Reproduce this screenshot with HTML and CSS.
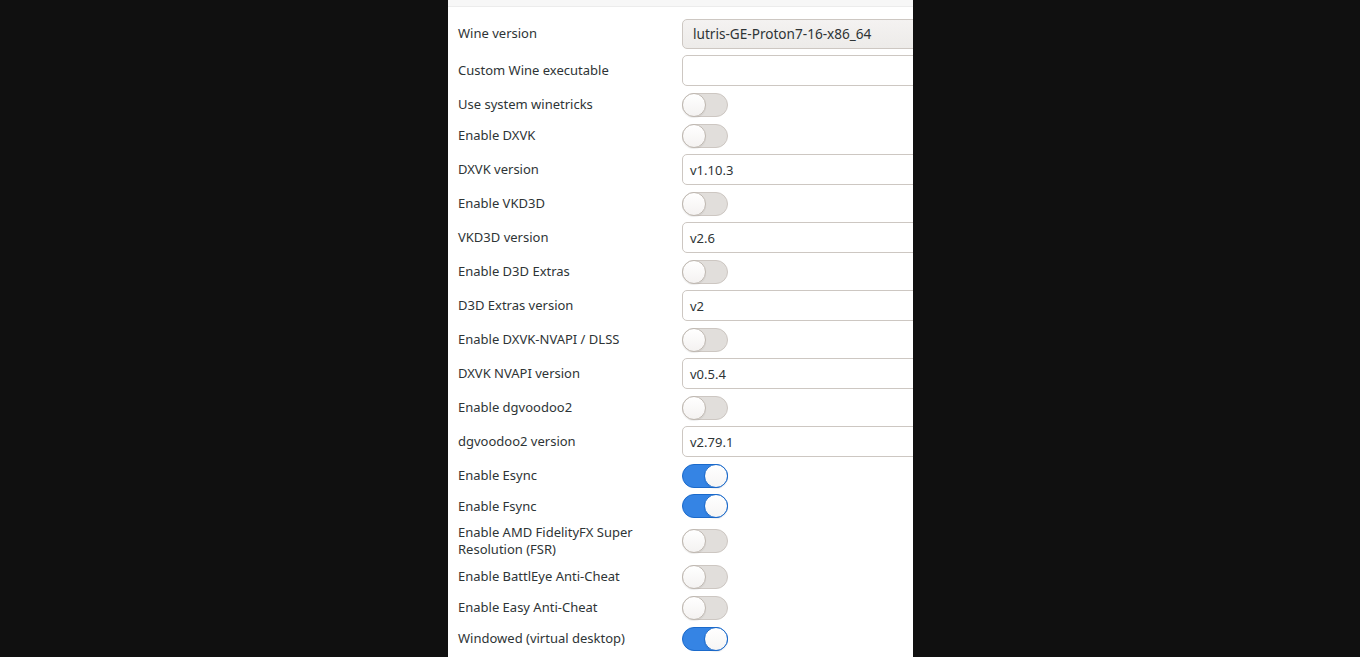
FILE: index.html
```html
<!DOCTYPE html>
<html>
<head>
<meta charset="utf-8">
<link rel="stylesheet" href="styles.css">
</head>
<body>
<div class="stage">
  <div class="panel">
    <div class="topstrip"></div>
    <div class="list">
      <div class="row row-entry"><div class="label">Wine version</div><div class="ctl"><div class="combo">lutris-GE-Proton7-16-x86_64</div></div></div>
      <div class="row row-entry"><div class="label">Custom Wine executable</div><div class="ctl"><div class="entry"></div></div></div>
      <div class="row row-switch"><div class="label">Use system winetricks</div><div class="ctl"><div class="switch"></div></div></div>
      <div class="row row-switch"><div class="label">Enable DXVK</div><div class="ctl"><div class="switch"></div></div></div>
      <div class="row row-entry"><div class="label">DXVK version</div><div class="ctl"><div class="entry">v1.10.3</div></div></div>
      <div class="row row-switch"><div class="label">Enable VKD3D</div><div class="ctl"><div class="switch"></div></div></div>
      <div class="row row-entry"><div class="label">VKD3D version</div><div class="ctl"><div class="entry">v2.6</div></div></div>
      <div class="row row-switch"><div class="label">Enable D3D Extras</div><div class="ctl"><div class="switch"></div></div></div>
      <div class="row row-entry"><div class="label">D3D Extras version</div><div class="ctl"><div class="entry">v2</div></div></div>
      <div class="row row-switch"><div class="label">Enable DXVK-NVAPI / DLSS</div><div class="ctl"><div class="switch"></div></div></div>
      <div class="row row-entry"><div class="label">DXVK NVAPI version</div><div class="ctl"><div class="entry">v0.5.4</div></div></div>
      <div class="row row-switch"><div class="label">Enable dgvoodoo2</div><div class="ctl"><div class="switch"></div></div></div>
      <div class="row row-entry"><div class="label">dgvoodoo2 version</div><div class="ctl"><div class="entry">v2.79.1</div></div></div>
      <div class="row row-switch"><div class="label">Enable Esync</div><div class="ctl"><div class="switch on"></div></div></div>
      <div class="row row-switch tight"><div class="label">Enable Fsync</div><div class="ctl"><div class="switch on"></div></div></div>
      <div class="row row-switch"><div class="label">Enable AMD FidelityFX Super Resolution (FSR)</div><div class="ctl"><div class="switch"></div></div></div>
      <div class="row row-switch"><div class="label">Enable BattlEye Anti-Cheat</div><div class="ctl"><div class="switch"></div></div></div>
      <div class="row row-switch"><div class="label">Enable Easy Anti-Cheat</div><div class="ctl"><div class="switch"></div></div></div>
      <div class="row row-switch"><div class="label">Windowed (virtual desktop)</div><div class="ctl"><div class="switch on"></div></div></div>
    </div>
  </div>
</div>
</body>
</html>
```
FILE: styles.css
```css
html, body {
  margin: 0;
  padding: 0;
  background: #101010;
  height: 100%;
  overflow: hidden;
}
.stage {
  display: flex;
  justify-content: flex-start;
  padding-left: 448px;
  height: 657px;
}
.panel {
  width: 465px;
  height: 657px;
  background: #ffffff;
  overflow: hidden;
  font-family: "Noto Sans", "DejaVu Sans", sans-serif;
  font-size: 13px;
  color: #2e3436;
}
.topstrip {
  height: 6px;
  background: #f7f7f7;
  border-bottom: 1px solid #ececec;
}
.list {
  padding: 8px 0 0 10px;
  display: flex;
  flex-direction: column;
}
.row {
  display: flex;
  align-items: center;
  padding: 3px 0;
}
.row-entry { min-height: 31px; }
.row-switch { min-height: 25px; }
.row-switch.tight { min-height: 24px; }
.label {
  flex: none;
  line-height: 17px;
  padding-right: 12px;
  box-sizing: border-box;
  width: 224px;
}
.ctl {
  flex: none;
  width: 300px;
  display: flex;
  align-items: center;
}
.combo {
  box-sizing: border-box;
  width: 300px;
  height: 30px;
  border: 1px solid #cdc7c2;
  border-radius: 5px;
  background: linear-gradient(#f4f2f1, #edebe9);
  padding: 0 10px;
  display: flex;
  align-items: center;
  font-size: 13.6px;
}
.entry {
  box-sizing: border-box;
  width: 300px;
  height: 31px;
  border: 1px solid #cdc7c2;
  border-radius: 5px;
  background: #ffffff;
  padding: 0 7px;
  display: flex;
  align-items: center;
}
.switch {
  position: relative;
  box-sizing: border-box;
  width: 46px;
  height: 24px;
  border-radius: 12px;
  background: #e1dedb;
  border: 1px solid #cdc7c2;
}
.switch::after {
  content: "";
  position: absolute;
  top: -1px;
  left: -1px;
  box-sizing: border-box;
  width: 24px;
  height: 24px;
  border-radius: 50%;
  background: linear-gradient(#ffffff, #f4f2f1);
  border: 1px solid #bfb8b1;
  box-shadow: 0 1px 1px rgba(0,0,0,0.08);
}
.switch.on {
  background: #3584e4;
  border-color: #1b6acb;
}
.switch.on::after {
  left: auto;
  right: -1px;
  border-color: #1b6acb;
  background: linear-gradient(#ffffff, #f6f5f4);
}
```
